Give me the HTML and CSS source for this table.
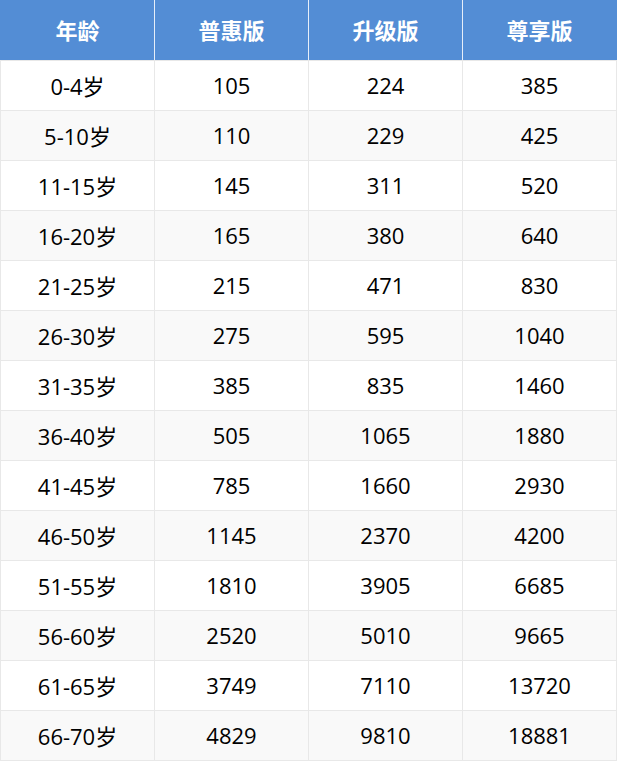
FILE: index.html
```html
<!DOCTYPE html>
<html lang="zh">
<head>
<meta charset="utf-8">
<link rel="stylesheet" href="styles.css">
</head>
<body>
<div class="table">
  <div class="row head"><div class="cell">年龄</div><div class="cell">普惠版</div><div class="cell">升级版</div><div class="cell">尊享版</div></div>
  <div class="row"><div class="cell">0-4岁</div><div class="cell">105</div><div class="cell">224</div><div class="cell">385</div></div>
  <div class="row"><div class="cell">5-10岁</div><div class="cell">110</div><div class="cell">229</div><div class="cell">425</div></div>
  <div class="row"><div class="cell">11-15岁</div><div class="cell">145</div><div class="cell">311</div><div class="cell">520</div></div>
  <div class="row"><div class="cell">16-20岁</div><div class="cell">165</div><div class="cell">380</div><div class="cell">640</div></div>
  <div class="row"><div class="cell">21-25岁</div><div class="cell">215</div><div class="cell">471</div><div class="cell">830</div></div>
  <div class="row"><div class="cell">26-30岁</div><div class="cell">275</div><div class="cell">595</div><div class="cell">1040</div></div>
  <div class="row"><div class="cell">31-35岁</div><div class="cell">385</div><div class="cell">835</div><div class="cell">1460</div></div>
  <div class="row"><div class="cell">36-40岁</div><div class="cell">505</div><div class="cell">1065</div><div class="cell">1880</div></div>
  <div class="row"><div class="cell">41-45岁</div><div class="cell">785</div><div class="cell">1660</div><div class="cell">2930</div></div>
  <div class="row"><div class="cell">46-50岁</div><div class="cell">1145</div><div class="cell">2370</div><div class="cell">4200</div></div>
  <div class="row"><div class="cell">51-55岁</div><div class="cell">1810</div><div class="cell">3905</div><div class="cell">6685</div></div>
  <div class="row"><div class="cell">56-60岁</div><div class="cell">2520</div><div class="cell">5010</div><div class="cell">9665</div></div>
  <div class="row"><div class="cell">61-65岁</div><div class="cell">3749</div><div class="cell">7110</div><div class="cell">13720</div></div>
  <div class="row"><div class="cell">66-70岁</div><div class="cell">4829</div><div class="cell">9810</div><div class="cell">18881</div></div>
</div>
</body>
</html>
```
FILE: styles.css
```css
html, body {
  margin: 0;
  padding: 0;
  background: #ffffff;
}
.table {
  width: 617px;
  font-family: "Open Sans", "Noto Sans CJK SC", sans-serif;
  font-size: 22px;
  color: #000;
}
.row {
  display: grid;
  grid-template-columns: 154px 154px 154px 155px;
  height: 50px;
  box-sizing: border-box;
  border-bottom: 1px solid #e8e8e8;
}
.row:nth-child(odd) {
  background: #f9f9f9;
}
.cell {
  display: flex;
  align-items: center;
  justify-content: center;
  padding-bottom: 2px;
  border-left: 1px solid #e8e8e8;
}
.cell:last-child {
  border-right: 1px solid #e8e8e8;
}
.row.head {
  height: 61px;
  background: #538dd5;
  color: #fff;
  font-weight: bold;
  font-family: "Noto Sans CJK SC", sans-serif;
}
.row.head .cell {
  border-left-color: #538dd5;
}
.row.head .cell + .cell {
  border-left-color: #e6eef9;
}
.row.head .cell:last-child {
  border-right-color: #538dd5;
}
```
